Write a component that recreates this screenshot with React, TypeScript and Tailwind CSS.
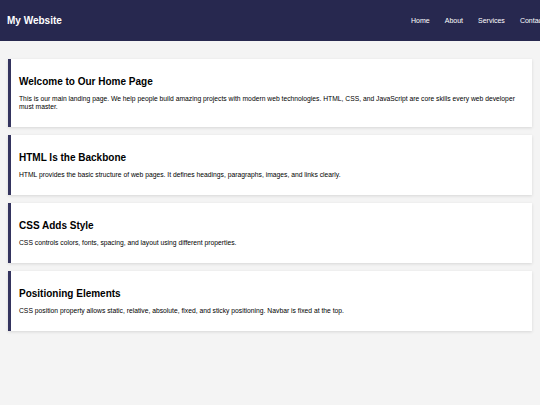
import React from "react";

const cards = [
  {
    title: "Welcome to Our Home Page",
    body: "This is our main landing page. We help people build amazing projects with modern web technologies. HTML, CSS, and JavaScript are core skills every web developer must master.",
  },
  {
    title: "HTML Is the Backbone",
    body: "HTML provides the basic structure of web pages. It defines headings, paragraphs, images, and links clearly.",
  },
  {
    title: "CSS Adds Style",
    body: "CSS controls colors, fonts, spacing, and layout using different properties.",
  },
  {
    title: "Positioning Elements",
    body: "CSS position property allows static, relative, absolute, fixed, and sticky positioning. Navbar is fixed at the top.",
  },
];

export default function App() {
  return (
    <div
      className="w-[540px] h-[405px] overflow-hidden bg-[#f4f4f4]"
      style={{ fontFamily: '"Liberation Sans", Arial, sans-serif' }}
    >
      <nav className="h-[41px] bg-[#27284f] flex items-center pl-[7px] overflow-hidden">
        <div className="text-white font-bold text-[10px] leading-none">My Website</div>
        <ul className="ml-auto mr-[-4px] flex shrink-0 gap-[15px] text-[7px] text-white leading-none">
          <li>Home</li>
          <li>About</li>
          <li>Services</li>
          <li>Contact</li>
        </ul>
      </nav>
      <main className="pt-[18px] px-[8px] flex flex-col gap-[8px]">
        {cards.map((c) => (
          <section
            key={c.title}
            className="bg-white border-l-[3px] border-[#34345e] shadow-[0_1px_3px_rgba(0,0,0,0.12)] pl-[8px] pr-[10px] pt-[17px] pb-[16px]"
          >
            <h2 className="text-[10px] font-bold leading-[12px] text-black mb-[7px]">{c.title}</h2>
            <p className="text-[6.75px] leading-[8px] text-black">{c.body}</p>
          </section>
        ))}
      </main>
    </div>
  );
}
